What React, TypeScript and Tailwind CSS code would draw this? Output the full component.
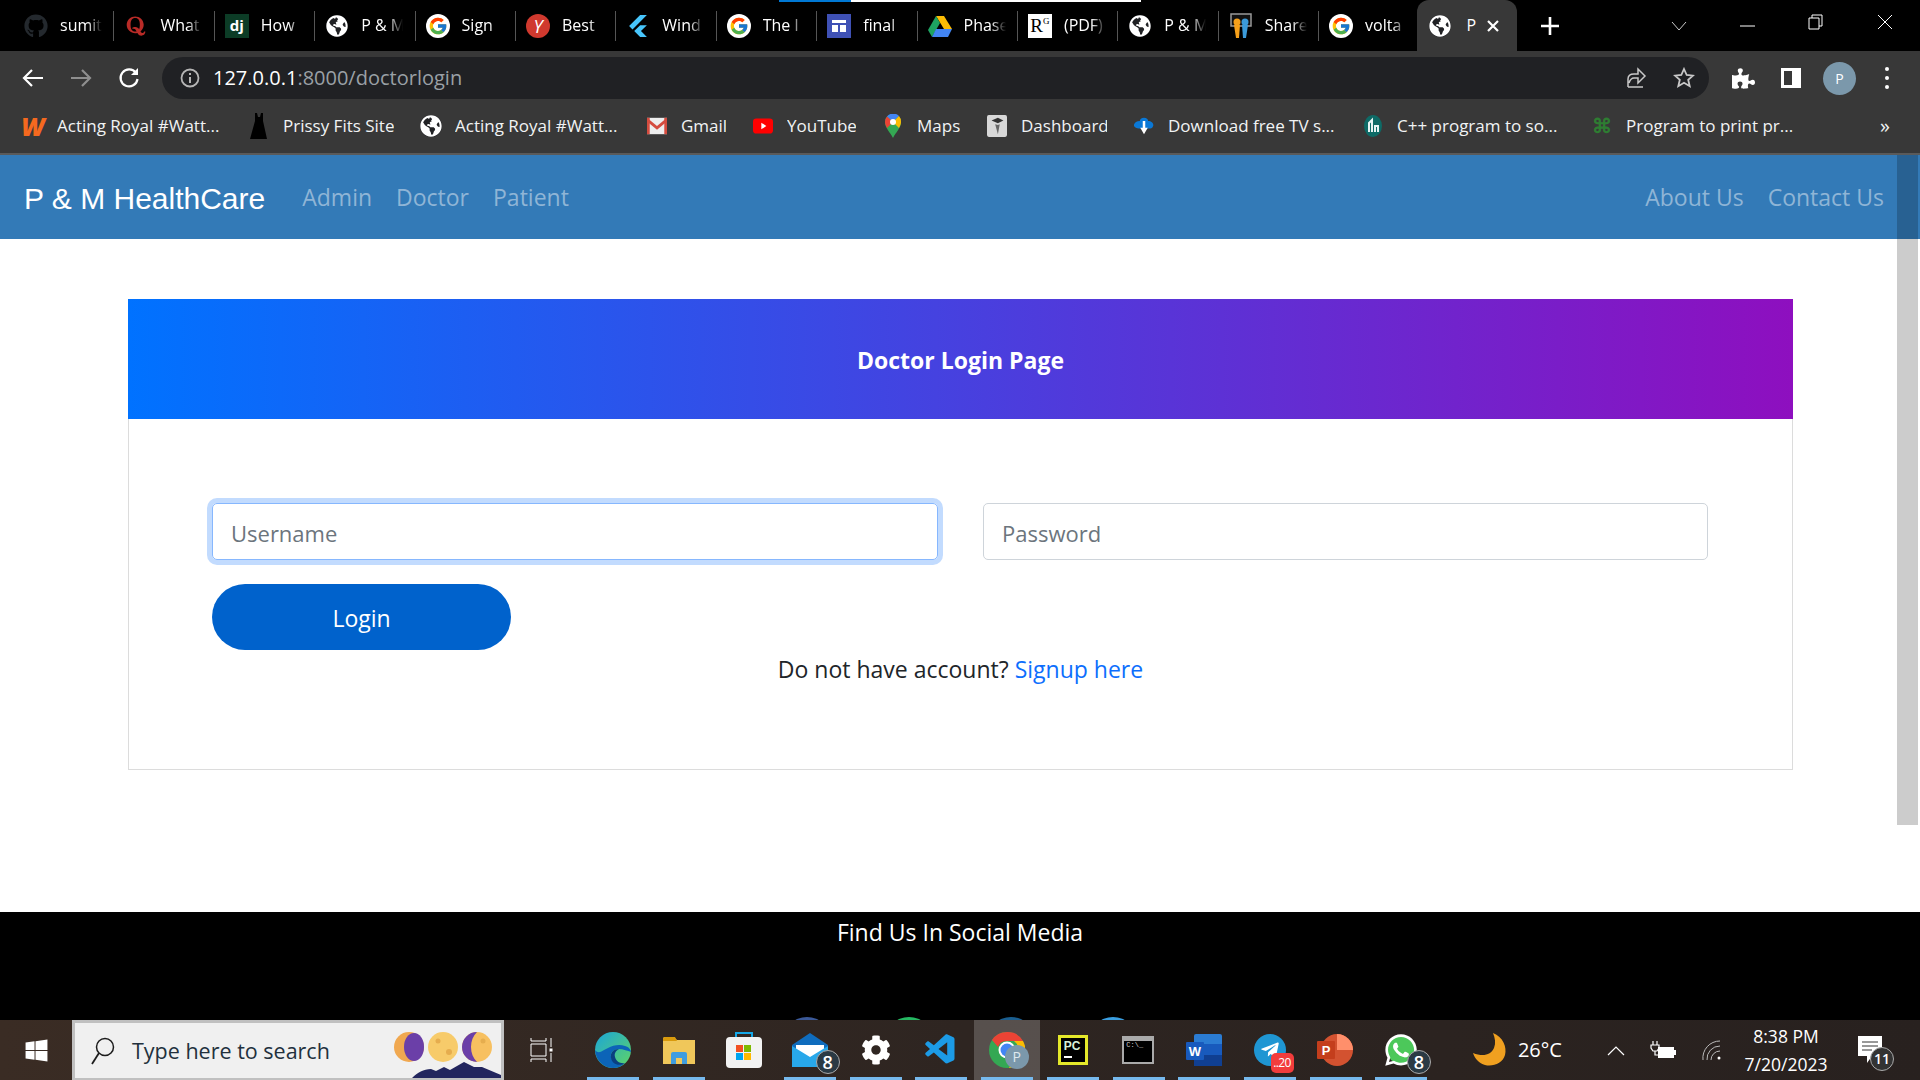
import React from 'react';
import { FaGithub, FaQuora, FaGlobeAmericas, FaWindows, FaCog, FaTelegramPlane, FaWhatsapp, FaPuzzlePiece } from 'react-icons/fa';
import { FcGoogle } from 'react-icons/fc';
import { SiFlutter } from 'react-icons/si';
import { VscVscode } from 'react-icons/vsc';

const uiFont = "font-['Open_Sans',sans-serif]";

function Globe({ size = 22 }: { size?: number }) {
  return (
    <span className="flex items-center justify-center rounded-full bg-[#202124]" style={{ width: size, height: size }}>
      <FaGlobeAmericas size={size} color="#fff" />
    </span>
  );
}

function GoogleIcon() {
  return (
    <span className="flex h-[24px] w-[24px] items-center justify-center rounded-full bg-white">
      <FcGoogle size={20} />
    </span>
  );
}

function Drive() {
  return (
    <svg width="24" height="22" viewBox="0 0 24 22">
      <path d="M8 1h8l8 13h-8z" fill="#fbbc04" />
      <path d="M8 1L0 15l4 7 8-14z" fill="#1ea362" />
      <path d="M4 22h16l4-8H8z" fill="#4285f4" />
    </svg>
  );
}

function ShareIcon() {
  return (
    <svg width="22" height="26" viewBox="0 0 22 26">
      <rect x="1" y="1" width="20" height="12" fill="#111" stroke="#999" strokeWidth="1.5" />
      <circle cx="7" cy="9" r="3.5" fill="#f6a01a" />
      <circle cx="15" cy="9" r="3.5" fill="#3b9ad9" />
      <path d="M4 12h6l-1 13H6z" fill="#f6a01a" />
      <path d="M12 12h6l-2 13h-3z" fill="#3b9ad9" />
    </svg>
  );
}

const TABS: { label: string; icon: React.ReactNode }[] = [
  { label: 'sumit', icon: <FaGithub size={24} color="#24292e" /> },
  { label: 'What', icon: <FaQuora size={22} color="#b92b27" /> },
  { label: 'How', icon: <span className="flex h-[24px] w-[24px] items-center justify-center bg-[#0c3c26] text-[15px] font-bold leading-none text-white">dj</span> },
  { label: 'P & M', icon: <Globe /> },
  { label: 'Sign', icon: <GoogleIcon /> },
  { label: 'Best', icon: <span className="flex h-[24px] w-[24px] items-center justify-center rounded-full bg-[#d0392e] text-[18px] italic leading-none text-white">Y</span> },
  { label: 'Wind', icon: <SiFlutter size={22} color="#47c5fb" /> },
  { label: 'The l', icon: <GoogleIcon /> },
  {
    label: 'final',
    icon: (
      <svg width="24" height="24" viewBox="0 0 24 24">
        <rect width="24" height="24" fill="#3f51b5" />
        <rect x="5" y="6" width="14" height="3" fill="#fff" />
        <rect x="5" y="11" width="6" height="7" fill="#fff" />
        <rect x="13" y="11" width="6" height="7" fill="#fff" />
      </svg>
    ),
  },
  { label: 'Phase', icon: <Drive /> },
  {
    label: '(PDF)',
    icon: (
      <span className="flex h-[24px] w-[24px] items-start justify-center bg-white font-['Liberation_Serif',serif] text-[19px] leading-[24px] text-black">
        R<span className="text-[9px] leading-[14px]">G</span>
      </span>
    ),
  },
  { label: 'P & M', icon: <Globe /> },
  { label: 'Share', icon: <ShareIcon /> },
  { label: 'volta', icon: <GoogleIcon /> },
];

function Tab({ label, icon }: { label: string; icon: React.ReactNode }) {
  return (
    <div className="flex h-[51px] w-[100.4px] shrink-0 items-center pl-[10px]">
      <span className="flex w-[24px] shrink-0 items-center justify-center">{icon}</span>
      <span className="ml-[12px] w-[42px] overflow-hidden whitespace-nowrap pb-[2px] text-[16px] text-white [mask-image:linear-gradient(to_right,black_65%,transparent)]">
        {label}
      </span>
      <span className="ml-auto h-[30px] w-px bg-[#555]" />
    </div>
  );
}

function TabStrip() {
  return (
    <div className={`relative flex h-[51px] items-center bg-black pl-[14px] ${uiFont}`}>
      {/* page load progress line */}
      <div className="absolute left-[779px] top-0 h-[2px] w-[72px] bg-[#0078d4]" />
      <div className="absolute left-[851px] top-0 h-[2px] w-[290px] bg-white" />
      {TABS.map((t, i) => (
        <Tab key={i} label={t.label} icon={t.icon} />
      ))}
      <div className="relative -ml-[2px] flex h-[51px] w-[100px] shrink-0 items-center rounded-t-[12px] bg-[#383838] pl-[12px]">
        <Globe size={22} />
        <span className="ml-[15px] pb-[2px] text-[16px] text-white">P</span>
        <svg className="ml-[10px]" width="14" height="14" viewBox="0 0 14 14">
          <path d="M2 2l10 10M12 2L2 12" stroke="#fff" strokeWidth="2.2" />
        </svg>
      </div>
      <svg className="ml-[24px]" width="18" height="18" viewBox="0 0 18 18">
        <path d="M9 0v18M0 9h18" stroke="#fff" strokeWidth="2.6" />
      </svg>
      <svg className="ml-[112px]" width="16" height="10" viewBox="0 0 16 10">
        <path d="M1 1l7 8 7-8" stroke="#ccc" strokeWidth="1" fill="none" />
      </svg>
      <svg className="ml-[53px]" width="15" height="2" viewBox="0 0 15 2">
        <path d="M0 1h15" stroke="#fff" strokeWidth="1" />
      </svg>
      <svg className="ml-[53px] -mt-[8px]" width="15" height="16" viewBox="0 0 15 16">
        <path d="M4 4V1h10v11h-3M1 4h10v11H1z" stroke="#fff" strokeWidth="1" fill="none" />
      </svg>
      <svg className="ml-[54px] -mt-[8px]" width="16" height="16" viewBox="0 0 16 16">
        <path d="M1 1l14 14M15 1L1 15" stroke="#fff" strokeWidth="1" />
      </svg>
    </div>
  );
}

function Toolbar() {
  return (
    <div className={`flex h-[51px] items-center bg-[#383838] pt-[3px] ${uiFont}`}>
      <svg className="ml-[22px]" width="22" height="20" viewBox="0 0 22 20">
        <path d="M21 10H3M10 2l-8 8 8 8" stroke="#fff" strokeWidth="2.2" fill="none" />
      </svg>
      <svg className="ml-[26px]" width="22" height="20" viewBox="0 0 22 20">
        <path d="M1 10h18M12 2l8 8-8 8" stroke="#8f8f8f" strokeWidth="2.2" fill="none" />
      </svg>
      <svg className="ml-[26px]" width="22" height="22" viewBox="0 0 22 22">
        <path d="M18 6a8.5 8.5 0 1 0 1.5 6" stroke="#fff" strokeWidth="2.2" fill="none" />
        <path d="M20 1v7h-7z" fill="#fff" />
      </svg>
      <div className="ml-[22px] flex h-[42px] w-[1547px] items-center rounded-full bg-[#202124] pl-[18px]">
        <svg width="20" height="20" viewBox="0 0 20 20">
          <circle cx="10" cy="10" r="8.5" stroke="#b5b5b5" strokeWidth="1.8" fill="none" />
          <path d="M10 9v6M10 5v2" stroke="#b5b5b5" strokeWidth="2" />
        </svg>
        <span className="ml-[13px] text-[20px] leading-none text-white">
          127.0.0.1<span className="text-[#9aa0a6]">:8000/doctorlogin</span>
        </span>
        <svg className="ml-auto" width="22" height="22" viewBox="0 0 22 22">
          <path d="M3 20h15M3 20v-8c0-3 2-5 6-5h4V2l7 7-7 7v-5H9c-3 0-4 2-5 5" stroke="#c8c8c8" strokeWidth="1.5" fill="none" />
        </svg>
        <svg className="ml-[26px] mr-[14px]" width="22" height="22" viewBox="0 0 22 22">
          <path d="M11 2l2.7 6 6.3.6-4.8 4.2 1.5 6.4L11 15.8 5.3 19.2l1.5-6.4L2 8.6 8.3 8z" stroke="#c8c8c8" strokeWidth="1.8" fill="none" />
        </svg>
      </div>
      <FaPuzzlePiece className="ml-[23px]" size={23} color="#fff" />
      <svg className="ml-[26px]" width="20" height="20" viewBox="0 0 20 20">
        <path d="M1.5 1.5h17v17h-17z" stroke="#fff" strokeWidth="3" fill="none" />
        <rect x="11" y="2" width="8" height="16" fill="#fff" />
      </svg>
      <span className="ml-[22px] flex h-[33px] w-[33px] items-center justify-center rounded-full bg-[#7b98ab] text-[14px] text-white">P</span>
      <span className="ml-[29px] flex flex-col gap-[5px]">
        <span className="h-[4px] w-[4px] rounded-full bg-white" />
        <span className="h-[4px] w-[4px] rounded-full bg-white" />
        <span className="h-[4px] w-[4px] rounded-full bg-white" />
      </span>
    </div>
  );
}

const BOOKMARKS: { label: string; text: string; icon: React.ReactNode }[] = [
  {
    label: 'Acting Royal #Watt...',
    text: 'w-[165px]',
    icon: <span className="text-[25px] font-extrabold italic leading-none text-[#f5691f]">W</span>,
  },
  {
    label: 'Prissy Fits Site',
    text: 'w-[111px]',
    icon: (
      <svg width="18" height="26" viewBox="0 0 18 26">
        <path d="M5 0h2l1 4h2l1-4h2l0 8 4 18H0L5 8z" fill="#000" />
      </svg>
    ),
  },
  { label: 'Acting Royal #Watt...', text: 'w-[165px]', icon: <Globe size={22} /> },
  {
    label: 'Gmail',
    text: 'w-[45px]',
    icon: (
      <svg width="22" height="18" viewBox="0 0 22 18">
        <rect width="22" height="18" fill="#eee" />
        <path d="M0 0l11 9 11-9v4l-11 9L0 4z" fill="#d54c3f" />
        <rect width="3" height="18" fill="#d54c3f" />
        <rect x="19" width="3" height="18" fill="#d54c3f" />
      </svg>
    ),
  },
  {
    label: 'YouTube',
    text: 'w-[69px]',
    icon: (
      <svg width="24" height="18" viewBox="0 0 24 18">
        <rect width="24" height="18" rx="4" fill="#f00" />
        <path d="M10 5l6 4-6 4z" fill="#fff" />
      </svg>
    ),
  },
  {
    label: 'Maps',
    text: 'w-[43px]',
    icon: (
      <svg width="18" height="24" viewBox="0 0 18 24">
        <path d="M9 24C6 18 1 14 1 8a8 8 0 0 1 16 0c0 6-5 10-8 16z" fill="#34a853" />
        <path d="M3 2.5A8 8 0 0 1 15 2L9 8z" fill="#4285f4" />
        <path d="M1 8a8 8 0 0 1 2-5.500L9 8l-6 6C2 12 1 10 1 8z" fill="#ea4335" />
        <path d="M17 8c0 2-1 4-2 6L9 8l6-6a8 8 0 0 1 2 6z" fill="#fbbc04" />
        <circle cx="9" cy="8" r="3" fill="#fff" />
      </svg>
    ),
  },
  {
    label: 'Dashboard',
    text: 'w-[86px]',
    icon: (
      <svg width="22" height="24" viewBox="0 0 22 24">
        <rect width="22" height="24" rx="2" fill="#d8d8d8" />
        <path d="M5 6l7-3 6 3-6 3z" fill="#333" />
        <path d="M9 10l3 1 2-1-2 11z" fill="#666" />
      </svg>
    ),
  },
  {
    label: 'Download free TV s...',
    text: 'w-[168px]',
    icon: (
      <svg width="24" height="24" viewBox="0 0 24 24">
        <path d="M12 2c3 0 5 2 5 4 4 0 7 3 6 6s-3 3-5 3H6c-3 0-5-1-6-3s2-6 7-6c0-2 2-4 5-4z" fill="#0a78d6" />
        <path d="M10.500 6h3v8h3l-4.500 8-4.500-8h3z" fill="#fff" />
      </svg>
    ),
  },
  {
    label: 'C++ program to so...',
    text: 'w-[168px]',
    icon: (
      <svg width="20" height="22" viewBox="0 0 20 22">
        <ellipse cx="10" cy="11" rx="9" ry="11" fill="#0e6a66" />
        <path d="M6 17V8l3-3v12M12 17v-6h3v6" stroke="#e8f4f4" strokeWidth="2" fill="none" />
      </svg>
    ),
  },
  {
    label: 'Program to print pr...',
    text: 'w-[167px]',
    icon: <span className="text-[20px] font-bold leading-none text-[#2e7d32]">⌘</span>,
  },
];

function BookmarksBar() {
  return (
    <div className={`relative flex h-[51px] items-center gap-[27px] bg-[#383838] pb-[3px] pl-[23px] text-[#f1f3f4] ${uiFont}`}>
      {BOOKMARKS.map((b, i) => (
        <div key={i} className="flex items-center gap-[14px]">
          <span className="flex w-[20px] shrink-0 items-center justify-center">{b.icon}</span>
          <span className={`${b.text} overflow-hidden whitespace-nowrap text-[17px]`}>{b.label}</span>
        </div>
      ))}
      <span className="absolute right-[30px] text-[20px] leading-none">»</span>
    </div>
  );
}

function Navbar() {
  return (
    <nav className={`flex h-[84px] items-center bg-[#337ab7] pl-[24px] pr-[36px] text-[23px] text-[#8fb5d6] ${uiFont}`}>
      <span className="mr-[37px] pt-[2px] font-['Liberation_Sans',sans-serif] text-[30px] text-white">P &amp; M HealthCare</span>
      <div className="flex gap-[24px]">
        <span>Admin</span>
        <span>Doctor</span>
        <span>Patient</span>
      </div>
      <div className="ml-auto flex gap-[24px]">
        <span>About Us</span>
        <span>Contact Us</span>
      </div>
    </nav>
  );
}

function LoginCard() {
  return (
    <div className={`mx-[128px] mt-[60px] h-[471px] w-[1665px] border border-[#dcdcdc] ${uiFont}`}>
      <div className="-mx-px -mt-px flex h-[120px] items-center justify-center bg-linear-to-r/srgb from-[#0072ff] to-[#8e0fbf] pt-[2px] text-[23px] font-bold text-white">
        Doctor Login Page
      </div>
      <div className="px-[83px] pt-[84px]">
        <div className="flex gap-[45px]">
          <input
            placeholder="Username"
            className="h-[57px] w-[726px] rounded-[5px] border border-[#86b7fe] px-[18px] pt-[2px] text-[22px] outline-none ring-[5px] ring-[#0d6efd]/25 placeholder:text-[#6c757d]"
          />
          <input
            placeholder="Password"
            className="h-[57px] w-[725px] rounded-[5px] border border-[#ced4da] px-[18px] pt-[2px] text-[22px] outline-none placeholder:text-[#6c757d]"
          />
        </div>
        <button className="mt-[24px] h-[66px] w-[299px] rounded-full bg-[#0062cc] pt-[2px] text-[23px] text-white">Login</button>
        <p className="mt-[2px] text-center text-[23px] text-[#212529]">
          Do not have account? <span className="text-[#0d6efd]">Signup here</span>
        </p>
      </div>
    </div>
  );
}

function Footer() {
  return (
    <footer className={`h-[108px] overflow-hidden bg-black text-center text-white ${uiFont}`}>
      <p className="pt-[2px] text-[23px] leading-[36px]">Find Us In Social Media</p>
      <div className="mt-[67px] flex justify-center gap-[54px]">
        <span className="h-[48px] w-[48px] rounded-full bg-[#3b5998]" />
        <span className="h-[48px] w-[48px] rounded-full bg-[#25b862]" />
        <span className="h-[48px] w-[48px] rounded-full bg-[#1a5e8f]" />
        <span className="h-[48px] w-[48px] rounded-full bg-[#3a9ee0]" />
      </div>
    </footer>
  );
}

function Badge({ n }: { n: string }) {
  if (n === 'P') {
    return (
      <span className="absolute bottom-[11px] right-[11px] flex h-[24px] w-[24px] items-center justify-center rounded-full bg-[#7b98ab] text-[14px] leading-none text-[#dfe8ee]">
        P
      </span>
    );
  }
  if (n === '..20') {
    return (
      <span className="absolute bottom-[7px] right-[9px] flex h-[20px] w-[23px] items-center justify-center rounded-[5px] bg-[#f23c3c] text-[12px] leading-none tracking-tighter text-white">
        {n}
      </span>
    );
  }
  return (
    <span className="absolute bottom-[6px] right-[3px] flex h-[24px] w-[24px] items-center justify-center rounded-full border border-[#aaa] bg-[#2b3a44] text-[18px] font-semibold leading-none text-white">
      {n}
    </span>
  );
}

const TASK_ICONS: { on: boolean; active?: boolean; icon: React.ReactNode; badge?: string }[] = [
  {
    on: true,
    icon: (
      <svg width="36" height="36" viewBox="0 0 36 36">
        <defs>
          <linearGradient id="edge" x1="0" y1="0" x2="1" y2="1">
            <stop offset="0" stopColor="#1ba5d8" />
            <stop offset="1" stopColor="#5fd565" />
          </linearGradient>
        </defs>
        <circle cx="18" cy="18" r="18" fill="url(#edge)" />
        <path d="M0 18C1 30 10 36 18 36c5 0 9-2 12-5-6 3-13 0-14-6-1-5 3-8 8-8 4 0 9 2 12 3 0-2-2-5-6-6-5-2-12-1-17 2-5 2-9 7-13 2z" fill="#0c64b8" />
        <path d="M16 26c1 6 8 9 14 5-5 1-9-2-10-6s1-6 4-8c-5 0-9 3-8 9z" fill="#0a3f80" />
      </svg>
    ),
  },
  {
    on: true,
    icon: (
      <svg width="32" height="28" viewBox="0 0 32 28">
        <path d="M0 3a2 2 0 0 1 2-2h9l3 3h18v24H0z" fill="#f0c75a" />
        <path d="M0 3a2 2 0 0 1 2-2h10l2 4H0z" fill="#d99a0c" />
        <path d="M8 28V18a2 2 0 0 1 2-2h12a2 2 0 0 1 2 2v10h-5v-6h-6v6z" fill="#3f9de0" />
      </svg>
    ),
  },
  {
    on: false,
    icon: (
      <svg width="36" height="36" viewBox="0 0 36 36">
        <path d="M10 6V1h16v5" stroke="#15a8e8" strokeWidth="2" fill="none" />
        <rect y="5" width="36" height="31" rx="4" fill="#f2f2f2" />
        <rect x="10" y="13" width="7" height="7" fill="#f25022" />
        <rect x="18" y="13" width="7" height="7" fill="#7fba00" />
        <rect x="10" y="21" width="7" height="7" fill="#00a4ef" />
        <rect x="18" y="21" width="7" height="7" fill="#ffb900" />
      </svg>
    ),
  },
  {
    on: true,
    badge: '8',
    icon: (
      <svg width="36" height="34" viewBox="0 0 36 34">
        <path d="M0 12L18 0l18 12v22H0z" fill="#0f6cbd" />
        <path d="M4 12h28v10L18 28 4 22z" fill="#fff" />
        <path d="M0 13l18 11 18-11v21H0z" fill="#28a8ea" />
      </svg>
    ),
  },
  { on: true, icon: <FaCog size={30} color="#fff" /> },
  { on: true, icon: <VscVscode size={36} color="#1c9be6" /> },
  {
    on: true,
    active: true,
    badge: 'P',
    icon: (
      <svg width="36" height="36" viewBox="0 0 36 36">
        <circle cx="18" cy="18" r="18" fill="#34a853" />
        <path d="M18 0a18 18 0 0 1 16 9H18a9 9 0 0 0-9 6L3 8a18 18 0 0 1 15-8z" fill="#ea4335" />
        <path d="M34 9a18 18 0 0 1-14 27l7-14a9 9 0 0 0-2-13z" fill="#fbbc04" />
        <circle cx="18" cy="18" r="8.500" fill="#fff" />
        <circle cx="18" cy="18" r="6.500" fill="#4285f4" />
      </svg>
    ),
  },
  {
    on: true,
    icon: (
      <span className="flex h-[30px] w-[30px] flex-col items-start border-[3px] border-[#e4e82a] bg-black pl-[3px] pt-[1px] font-['Liberation_Sans',sans-serif] text-[12px] font-bold leading-[14px] text-[#d8f0d8]">
        PC
        <span className="mt-[3px] h-[2px] w-[8px] bg-white" />
      </span>
    ),
  },
  {
    on: true,
    icon: (
      <span className="flex h-[28px] w-[32px] flex-col border-2 border-[#aaa] border-t-[5px] bg-black pl-[2px] font-['Liberation_Mono',monospace] text-[7px] leading-[9px] text-[#ccc]">
        C:\_
      </span>
    ),
  },
  {
    on: true,
    icon: (
      <svg width="36" height="32" viewBox="0 0 36 32">
        <rect x="8" width="28" height="32" rx="2" fill="#2b7cd3" />
        <rect x="8" y="10" width="28" height="11" fill="#185abd" />
        <rect x="8" y="21" width="28" height="11" fill="#103f91" />
        <rect y="8" width="18" height="18" rx="1" fill="#185abd" />
        <text x="9" y="22" textAnchor="middle" fontSize="13" fontWeight="700" fill="#fff" fontFamily="Liberation Sans">W</text>
      </svg>
    ),
  },
  {
    on: true,
    badge: '..20',
    icon: (
      <span className="flex h-[32px] w-[32px] items-center justify-center rounded-full bg-[#1f96d3]">
        <FaTelegramPlane size={20} color="#fff" />
      </span>
    ),
  },
  {
    on: true,
    icon: (
      <svg width="36" height="32" viewBox="0 0 36 32">
        <circle cx="20" cy="16" r="16" fill="#d35230" />
        <path d="M20 0a16 16 0 0 1 16 16H20z" fill="#ff8f6b" />
        <rect y="7" width="18" height="18" rx="1" fill="#c43e1c" />
        <text x="9" y="21" textAnchor="middle" fontSize="13" fontWeight="700" fill="#fff" fontFamily="Liberation Sans">P</text>
      </svg>
    ),
  },
  {
    on: true,
    badge: '8',
    icon: (
      <span className="relative flex h-[36px] w-[36px] items-center justify-center">
        <span className="absolute h-[28px] w-[28px] rounded-full bg-[#4cc85a]" />
        <FaWhatsapp size={36} color="#fff" className="relative" />
      </span>
    ),
  },
];

function Taskbar() {
  return (
    <div className={`flex h-[60px] items-stretch bg-linear-to-r from-[#3a2c24] via-[#2e2521] to-[#28211f] text-white ${uiFont}`}>
      <div className="flex w-[72px] shrink-0 items-center justify-center">
        <FaWindows size={25} color="#fff" />
      </div>
      <div className="relative flex w-[432px] shrink-0 items-center overflow-hidden border-[3px] border-b-[2px] border-[#c0c0c0] bg-[#f0f0f0] pl-[16px]">
        <svg width="24" height="28" viewBox="0 0 24 28">
          <circle cx="14" cy="10" r="8.500" stroke="#1c1c1c" strokeWidth="1.500" fill="none" />
          <path d="M8 16L1 27" stroke="#1c1c1c" strokeWidth="1.800" />
        </svg>
        <span className="ml-[17px] text-[21.500px] leading-none text-[#22303d]">Type here to search</span>
        {/* weather doodle on the search box */}
        <svg className="absolute right-0 top-0" width="112" height="56" viewBox="0 0 112 56">
          <circle cx="20" cy="24" r="15" fill="#f0a850" />
          <ellipse cx="25" cy="24" rx="10" ry="14" fill="#6b3fa8" />
          <circle cx="54" cy="24" r="15" fill="#f7cb6a" />
          <circle cx="49" cy="18" r="2.500" fill="#e6ad4e" />
          <circle cx="60" cy="29" r="3" fill="#e6ad4e" />
          <circle cx="88" cy="24" r="15" fill="#f7c060" />
          <path d="M88 9a15 15 0 0 0 0 30c-4-4-6-9-6-15s2-11 6-15z" fill="#6b3fa8" />
          <circle cx="94" cy="18" r="2.500" fill="#e6ad4e" />
          <path d="M22 56c6-6 12-10 20-10l5 2 8-4 6 3 14-8 10 5 8 0 19 8v4z" fill="#23265e" />
        </svg>
      </div>
      <div className="flex w-[76px] shrink-0 items-center justify-center">
        <svg width="24" height="24" viewBox="0 0 24 24">
          <path d="M1 0v3h15V0M1 24v-3h15v3M1 6h15v12H1zM21 0v9M21 15v9" stroke="#fff" strokeWidth="1" fill="none" />
          <rect x="19.500" y="10.500" width="3" height="3" fill="#fff" />
        </svg>
      </div>
      {TASK_ICONS.map((t, i) => (
        <div key={i} className={`relative flex w-[65.7px] shrink-0 items-center justify-center pb-[1px] ${t.active ? 'bg-white/20' : ''}`}>
          {t.icon}
          {t.badge && <Badge n={t.badge} />}
          {t.on && <span className="absolute bottom-0 left-[7px] h-[3px] w-[52px] bg-[#76b9ed]" />}
        </div>
      ))}
      <div className="ml-[39px] flex items-center">
        <svg width="34" height="34" viewBox="0 0 34 34">
          <path d="M20 0c10 4 14 14 12 22-2 8-12 12-20 10C6 30 2 26 0 20c10 4 18 2 21-5 2-5 1-10-1-15z" fill="#f0a020" />
        </svg>
        <span className="ml-[11px] text-[20px]">26°C</span>
        <svg className="ml-[45px]" width="18" height="11" viewBox="0 0 18 11">
          <path d="M1 10l8-8 8 8" stroke="#fff" strokeWidth="1.200" fill="none" />
        </svg>
        <svg className="ml-[25px]" width="26" height="20" viewBox="0 0 26 20">
          <path d="M3 1v4M7 1v4M1 5h8v3l-2 3H3L1 8zM5 11v4h3" stroke="#fff" strokeWidth="1.200" fill="none" />
          <rect x="8.500" y="7.500" width="15" height="10" fill="#fff" stroke="#fff" />
          <rect x="24" y="10" width="2" height="5" fill="#fff" />
        </svg>
        <svg className="ml-[26px]" width="20" height="20" viewBox="0 0 20 20">
          <path d="M1 20A17 17 0 0 1 18 1M5 20A13 13 0 0 1 18 6M9 20a9 9 0 0 1 9-9" stroke="#bbb" strokeWidth="1" fill="none" />
          <circle cx="17" cy="18" r="1.500" fill="#fff" />
        </svg>
        <div className="ml-[20px] flex w-[88px] flex-col items-center whitespace-nowrap text-[17.500px] leading-[28px]">
          <span>8:38 PM</span>
          <span>7/20/2023</span>
        </div>
        <div className="relative ml-[28px]">
          <svg width="24" height="28" viewBox="0 0 24 28">
            <path d="M0 0h24v20H14l-5 7v-7H0z" fill="#fff" />
            <path d="M4 6h16M4 10h16M4 14h10" stroke="#333" strokeWidth="1" />
          </svg>
          <span className="absolute -bottom-[7px] -right-[12px] flex h-[24px] w-[24px] items-center justify-center rounded-full border border-[#aaa] bg-[#333] text-[14px] font-semibold leading-none">
            11
          </span>
        </div>
      </div>
    </div>
  );
}

export default function App() {
  return (
    <div className="flex h-[1080px] w-[1920px] flex-col overflow-hidden bg-white">
      <TabStrip />
      <Toolbar />
      <BookmarksBar />
      <div className="h-[2px] bg-[#5a5a5a]" />
      <div className="relative flex h-[865px] flex-col">
        <Navbar />
        <LoginCard />
        <div className="flex-1" />
        <Footer />
        {/* page scrollbar thumb */}
        <div className="absolute right-[2px] top-0 h-[670px] w-[21px] bg-black/20" />
      </div>
      <Taskbar />
    </div>
  );
}
